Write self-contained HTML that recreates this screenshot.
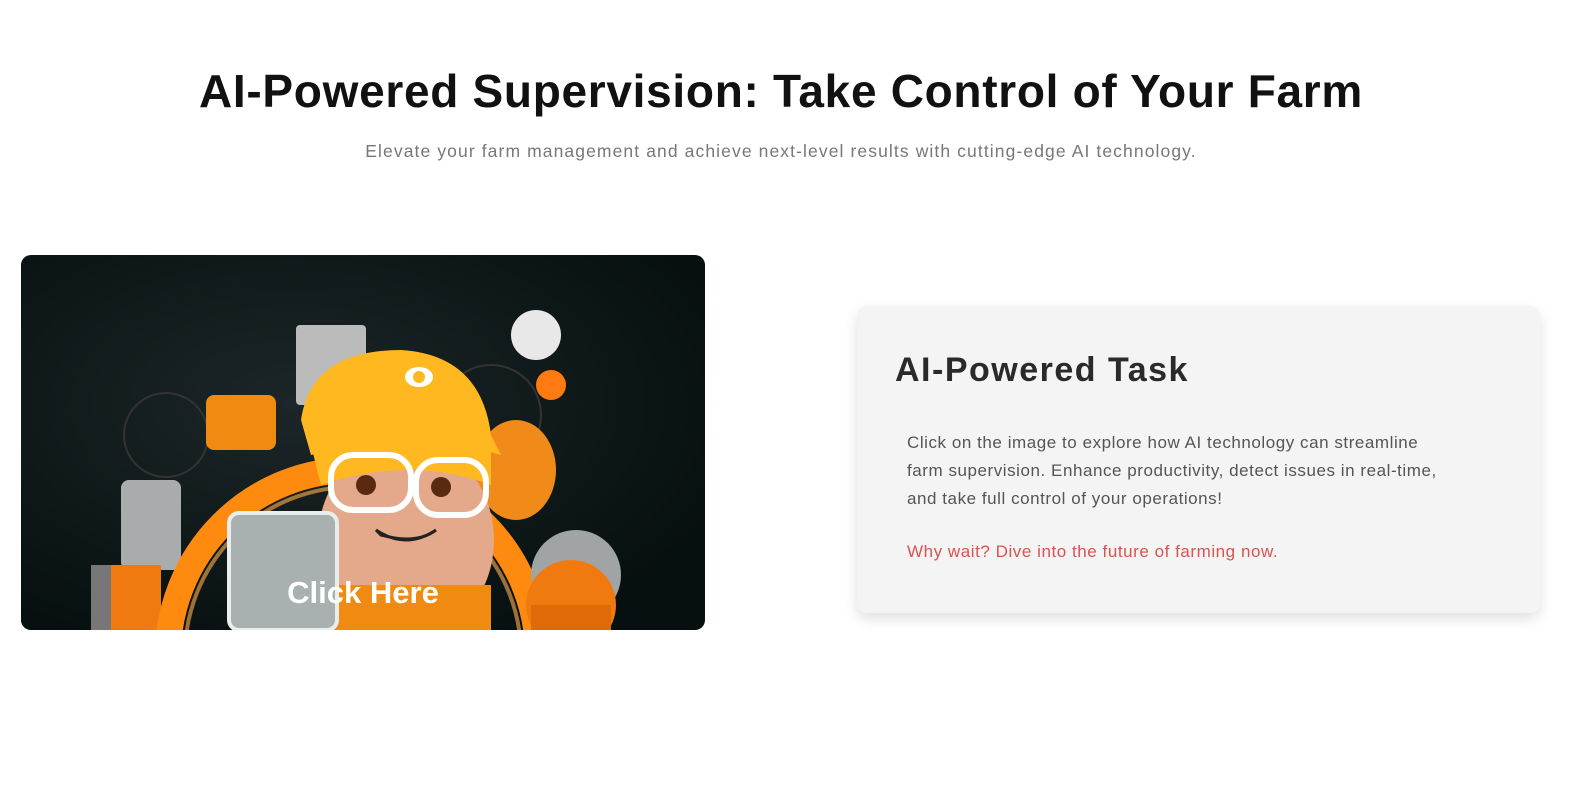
<!DOCTYPE html>
<html><head><meta charset="utf-8"><style>
html,body{margin:0;background:#fff;width:1569px;height:787px;overflow:hidden;font-family:"Liberation Sans",sans-serif}
h1{position:absolute;top:64px;left:0;width:1562px;text-align:center;margin:0;font-size:46px;font-weight:bold;color:#111;letter-spacing:0.7px}
.sub{position:absolute;top:141px;left:0;width:1562px;text-align:center;font-size:17.5px;color:#777;letter-spacing:1.1px}
.img{position:absolute;left:21px;top:255px;width:684px;height:375px;border-radius:10px;overflow:hidden;background:radial-gradient(ellipse at 40% 40%,#1c2628,#071010 80%)}
.img svg{display:block}
.click{position:absolute;left:0;width:684px;top:320px;text-align:center;color:#fff;font-size:31px;font-weight:bold}
.card{position:absolute;left:857px;top:306px;width:683px;height:307px;background:#f4f4f4;border-radius:10px;box-shadow:0 6px 14px rgba(0,0,0,.12)}
.card h2{position:absolute;left:38px;top:45px;margin:0;font-size:34px;color:#2a2a2a;letter-spacing:1.5px}
.card p{position:absolute;left:50px;top:123px;margin:0;width:600px;font-size:17px;line-height:28px;color:#555;letter-spacing:0.55px;white-space:nowrap}
.card .red{top:232px;color:#d9534f}
</style></head><body>
<h1>AI-Powered Supervision: Take Control of Your Farm</h1>
<div class="sub">Elevate your farm management and achieve next-level results with cutting-edge AI technology.</div>
<div class="img">
<svg width="684" height="375" viewBox="0 0 684 375">
<circle cx="145" cy="180" r="42" fill="none" stroke="#333" stroke-width="2"/>
<circle cx="470" cy="160" r="50" fill="none" stroke="#333" stroke-width="2"/>
<rect x="100" y="225" width="60" height="90" rx="8" fill="#a9acad"/>
<rect x="70" y="310" width="60" height="65" fill="#777"/>
<rect x="185" y="140" width="70" height="55" rx="8" fill="#f08a10"/>
<rect x="275" y="70" width="70" height="80" rx="4" fill="#bbb"/>
<rect x="90" y="310" width="50" height="65" fill="#f07a10"/>
<circle cx="332" cy="400" r="185" fill="none" stroke="#ff8a10" stroke-width="26"/>
<circle cx="332" cy="400" r="168" fill="none" stroke="#ffb050" stroke-width="4" opacity=".6"/>
<circle cx="515" cy="80" r="25" fill="#e8e8e8"/>
<circle cx="530" cy="130" r="15" fill="#ff7a10"/>
<ellipse cx="495" cy="215" rx="40" ry="50" fill="#f08a18"/>
<circle cx="555" cy="320" r="45" fill="#a0a4a4"/>
<circle cx="550" cy="350" r="45" fill="#f07a10"/>
<rect x="510" y="350" width="80" height="25" fill="#e06a08"/>
<path d="M280 165 Q290 95 380 95 Q460 100 470 180 L480 200 Q400 175 290 200 Z" fill="#ffb820"/>
<ellipse cx="398" cy="122" rx="14" ry="10" fill="#fff"/><circle cx="398" cy="122" r="6" fill="#ffb820"/>
<ellipse cx="385" cy="285" rx="88" ry="100" fill="#e4a88a"/>
<path d="M290 190 Q300 160 390 165 Q470 170 470 200 L470 230 Q390 200 300 230 Z" fill="#ffb820"/>
<rect x="310" y="200" width="80" height="55" rx="22" fill="none" stroke="#fff" stroke-width="6"/>
<rect x="395" y="205" width="70" height="55" rx="22" fill="none" stroke="#fff" stroke-width="6"/>
<circle cx="345" cy="230" r="10" fill="#5a2a10"/><circle cx="420" cy="232" r="10" fill="#5a2a10"/>
<path d="M355 275 Q385 295 415 275 Q395 290 360 280 Z" fill="#fff" stroke="#222" stroke-width="3"/>
<path d="M310 330 L470 330 L470 375 L310 375 Z" fill="#f08a10"/>
<rect x="208" y="258" width="108" height="117" rx="10" fill="#a8b0b0" stroke="#e8eeee" stroke-width="4"/>
</svg>
<div class="click">Click Here</div>
</div>
<div class="card">
<h2>AI-Powered Task</h2>
<p>Click on the image to explore how AI technology can streamline<br>farm supervision. Enhance productivity, detect issues in real-time,<br>and take full control of your operations!</p>
<p class="red">Why wait? Dive into the future of farming now.</p>
</div>
</body></html>
